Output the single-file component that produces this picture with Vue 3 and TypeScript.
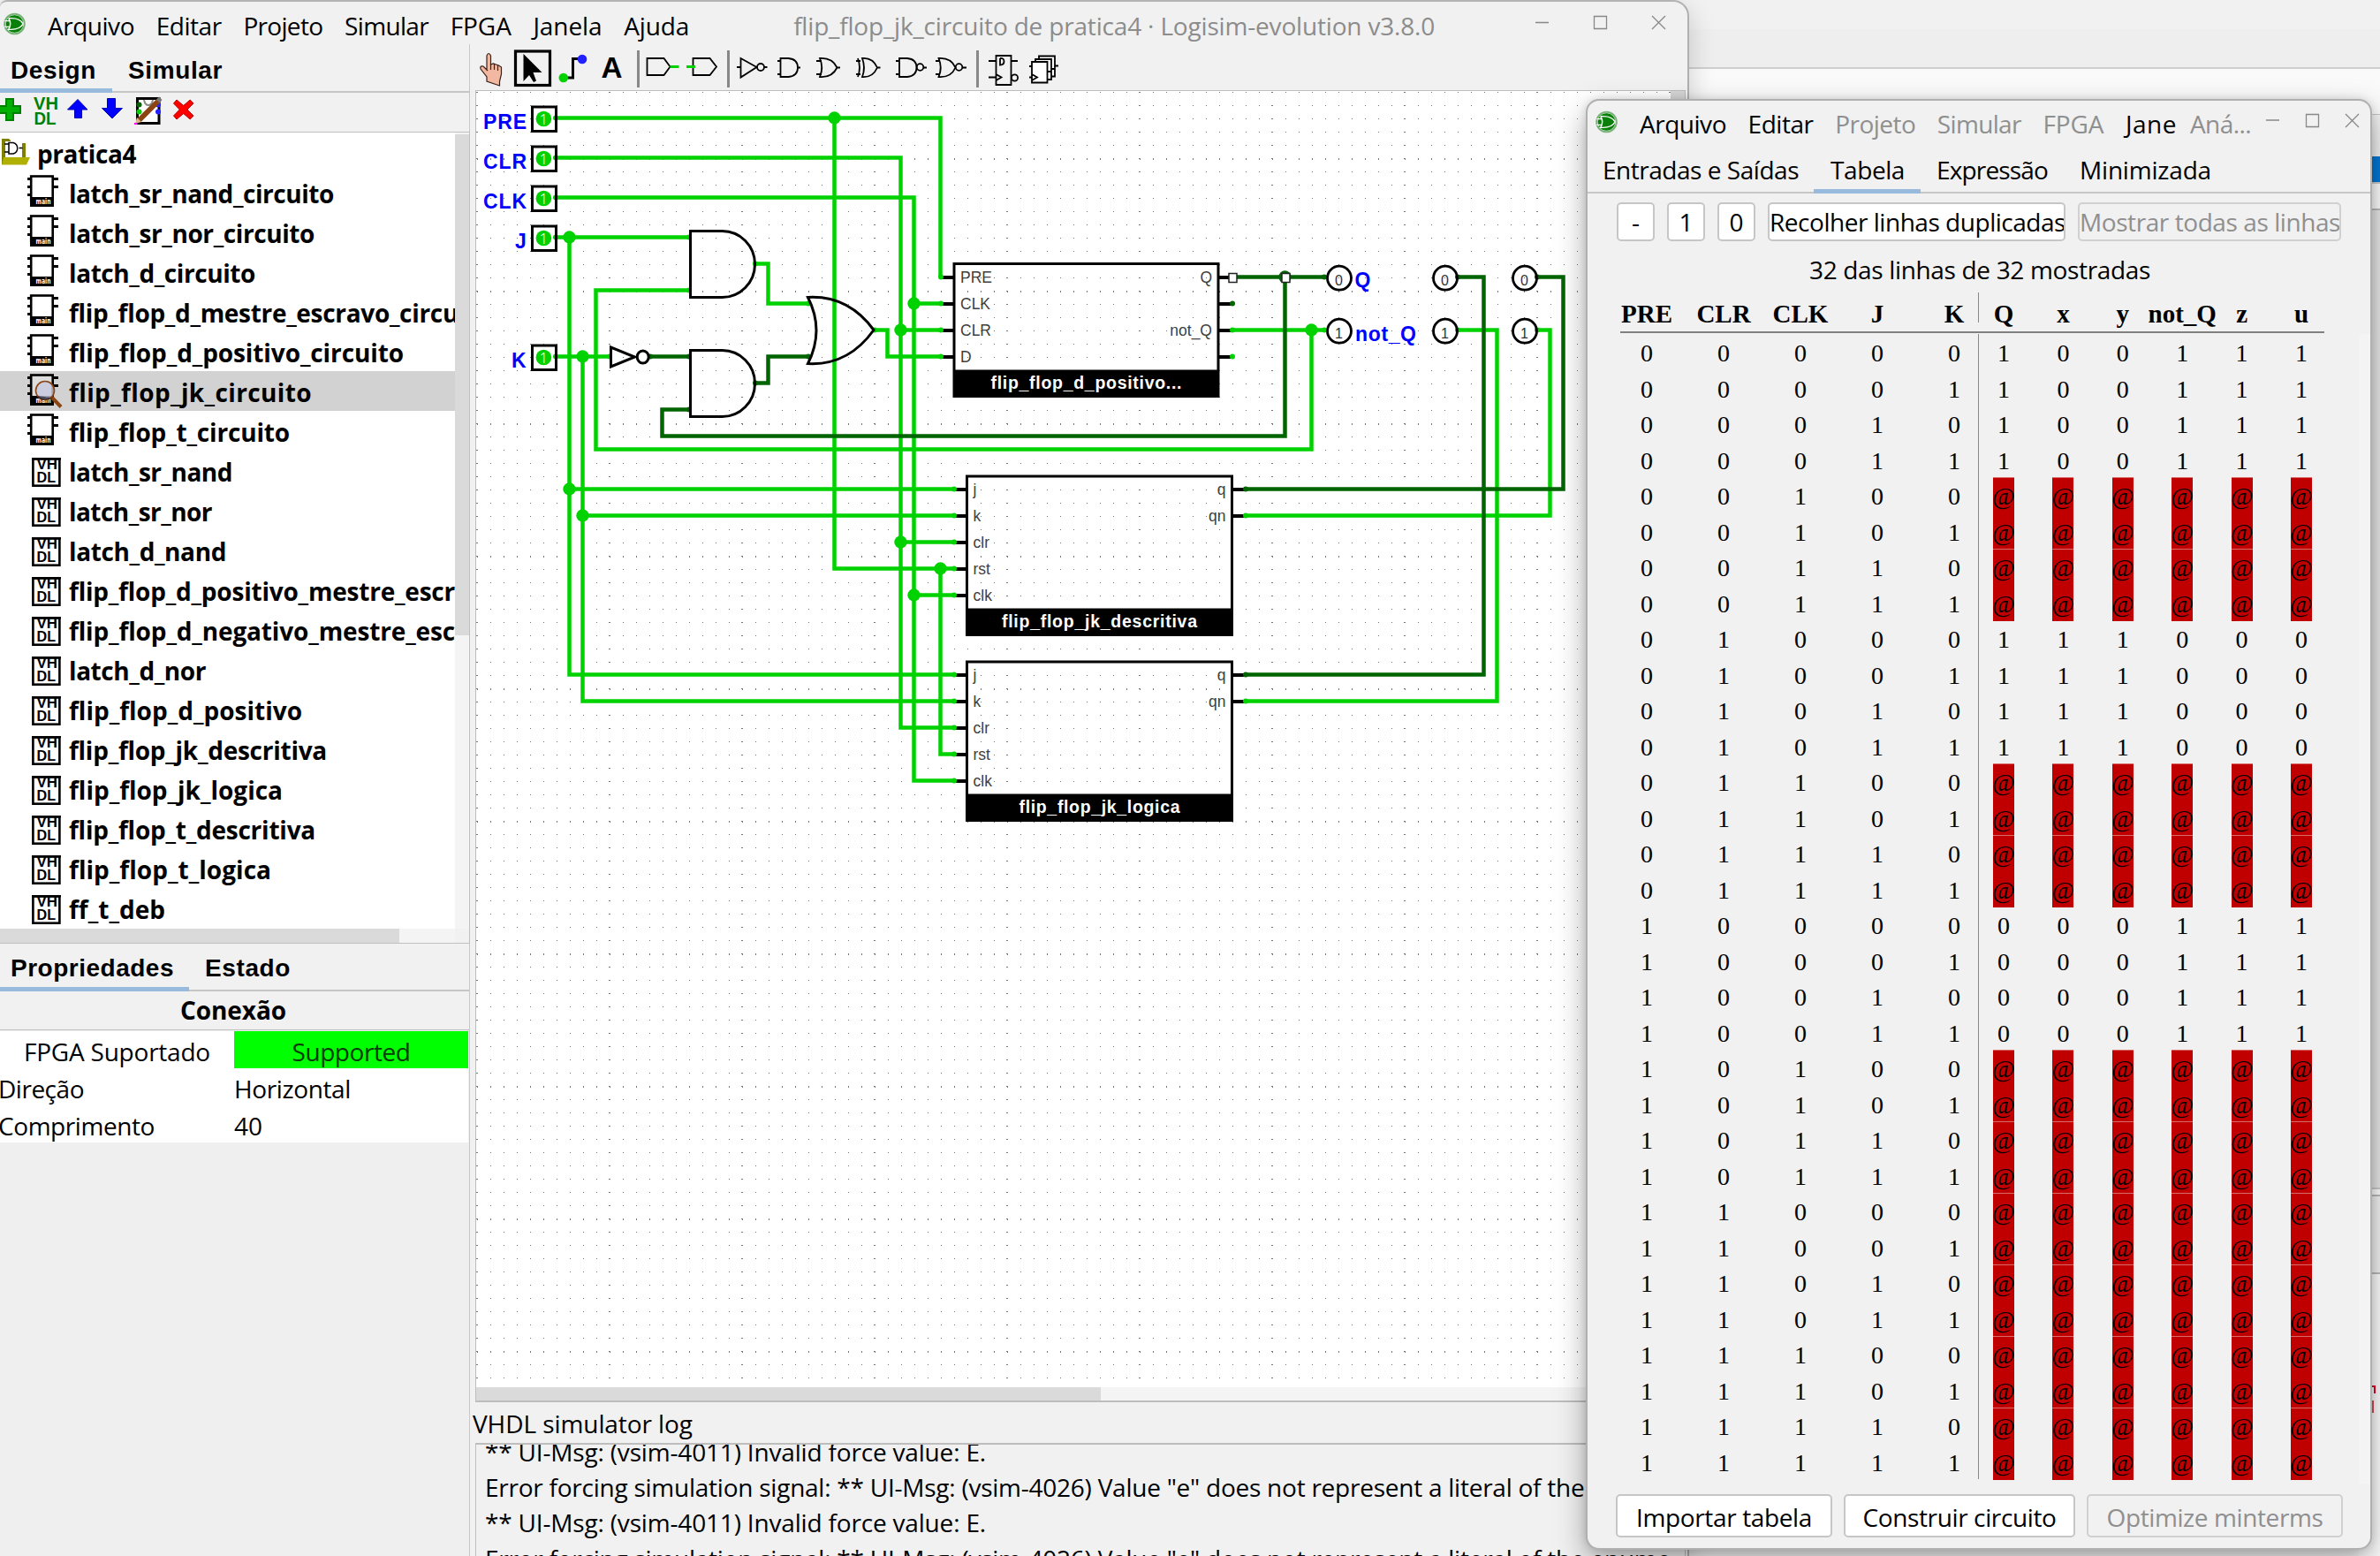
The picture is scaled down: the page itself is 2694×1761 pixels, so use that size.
<script setup lang="ts">
interface Label { t: string; w: number; off?: boolean }
interface Box { x: number; y: number; w: number; h: number; strip: number; name: string; nameW: number; ins: [string, number][]; outs: [string, number][]; pad: number }

// Tunes tracking so that a label takes exactly the given width.
const vFit = {
  mounted(el: HTMLElement, binding: { value: number }) {
    const n = (el.textContent ?? '').length
    if (!n || !binding.value) return
    el.style.letterSpacing = (binding.value - el.getBoundingClientRect().width) / n + 'px'
  },
}

const menu: Label[] = [
  { t: 'Arquivo', w: 98 }, { t: 'Editar', w: 74 }, { t: 'Projeto', w: 90 }, { t: 'Simular', w: 95 },
  { t: 'FPGA', w: 69 }, { t: 'Janela', w: 78 }, { t: 'Ajuda', w: 74 },
]
const menu2: Label[] = [
  { t: 'Arquivo', w: 98 }, { t: 'Editar', w: 74 }, { t: 'Projeto', w: 91, off: true }, { t: 'Simular', w: 95, off: true },
  { t: 'FPGA', w: 69, off: true }, { t: 'Jane', w: 58 },
]
const tree: { t: string; w: number; k: 'chip' | 'open' | 'vhdl' }[] = [
  { t: 'latch_sr_nand_circuito', w: 300, k: 'chip' },
  { t: 'latch_sr_nor_circuito', w: 278, k: 'chip' },
  { t: 'latch_d_circuito', w: 211, k: 'chip' },
  { t: 'flip_flop_d_mestre_escravo_circu', w: 441, k: 'chip' },
  { t: 'flip_flop_d_positivo_circuito', w: 379, k: 'chip' },
  { t: 'flip_flop_jk_circuito', w: 275, k: 'open' },
  { t: 'flip_flop_t_circuito', w: 250, k: 'chip' },
  { t: 'latch_sr_nand', w: 185, k: 'vhdl' },
  { t: 'latch_sr_nor', w: 162, k: 'vhdl' },
  { t: 'latch_d_nand', w: 178, k: 'vhdl' },
  { t: 'flip_flop_d_positivo_mestre_escr', w: 437, k: 'vhdl' },
  { t: 'flip_flop_d_negativo_mestre_esc', w: 437, k: 'vhdl' },
  { t: 'latch_d_nor', w: 155, k: 'vhdl' },
  { t: 'flip_flop_d_positivo', w: 264, k: 'vhdl' },
  { t: 'flip_flop_jk_descritiva', w: 292, k: 'vhdl' },
  { t: 'flip_flop_jk_logica', w: 242, k: 'vhdl' },
  { t: 'flip_flop_t_descritiva', w: 279, k: 'vhdl' },
  { t: 'flip_flop_t_logica', w: 229, k: 'vhdl' },
  { t: 'ff_t_deb', w: 109, k: 'vhdl' },
]
const log: Label[] = [
  { t: '** UI-Msg: (vsim-4011) Invalid force value: E.', w: 567 },
  { t: 'Error forcing simulation signal: ** UI-Msg: (vsim-4026) Value "e" does not represent a literal of the enume', w: 1342 },
  { t: '** UI-Msg: (vsim-4011) Invalid force value: E.', w: 567 },
  { t: 'Error forcing simulation signal: ** UI-Msg: (vsim-4026) Value "e" does not represent a literal of the enume', w: 1342 },
]

const pins: { n: string; y: number; w: number }[] = [
  { n: 'PRE', y: 133.5, w: 49 }, { n: 'CLR', y: 178.5, w: 49 }, { n: 'CLK', y: 223.5, w: 49 },
  { n: 'J', y: 268.5, w: 13 }, { n: 'K', y: 403.5, w: 17 },
]
const wires = [
  'M629 133.5H1064.5V313.5', 'M944.5 133.5V643.5H1080', 'M1064.5 643.5V853.5H1080',
  'M629 178.5H1019.5V823.5H1080', 'M1019.5 373.5H1065', 'M1019.5 613.5H1080',
  'M629 223.5H1034.5V883.5H1080', 'M1034.5 343.5H1065', 'M1034.5 673.5H1080',
  'M629 268.5H780', 'M644.5 268.5V763.5H1080', 'M644.5 553.5H1080',
  'M629 403.5H690', 'M659.5 403.5V793.5H1080', 'M659.5 583.5H1080',
  'M780 328.5H674.5V508.5H1484.5V373.5', 'M855 298.5H869.5V343.5H916', 'M989 373.5H1004.5V403.5H1065',
  'M1395 373.5H1500', 'M1650 373.5H1694.5V793.5H1409', 'M1740 373.5H1754.5V583.5H1409',
]
const darkWires = [
  'M735 403.5H780', 'M855 433.5H869.5V403.5H916', 'M780 463.5H749.5V493.5H1454.5V313.5', 'M1395 313.5H1500',
  'M1650 313.5H1679.5V763.5H1409', 'M1740 313.5H1769.5V553.5H1409',
]
const joints = [
  [944.5, 133.5], [644.5, 268.5], [659.5, 403.5], [1034.5, 343.5], [1019.5, 373.5], [1484.5, 373.5],
  [644.5, 553.5], [659.5, 583.5], [1019.5, 613.5], [1064.5, 643.5], [1034.5, 673.5],
]
const ends = [
  [629, 133.5], [629, 178.5], [629, 223.5], [629, 268.5], [629, 403.5], [780, 268.5], [780, 328.5], [855, 298.5],
  [915, 343.5], [990, 373.5], [690, 403.5], [1065, 313.5], [1065, 343.5], [1065, 373.5], [1065, 403.5],
  [1395, 373.5], [1395, 403.5], [1499, 373.5], [1650, 373.5], [1740, 373.5], [1410, 583.5], [1410, 793.5],
  [1080, 553.5], [1080, 583.5], [1080, 613.5], [1080, 643.5], [1080, 673.5],
  [1080, 763.5], [1080, 793.5], [1080, 823.5], [1080, 853.5], [1080, 883.5],
]
const darkEnds = [
  [736, 403.5], [780, 403.5], [780, 463.5], [855, 433.5], [915, 403.5], [1395, 343.5], [1499, 313.5],
  [1650, 313.5], [1740, 313.5], [1410, 553.5], [1410, 763.5],
]
const jk = (y: number): [string, number][] => [['j', y], ['k', y + 30], ['clr', y + 60], ['rst', y + 90], ['clk', y + 120]]
const boxes: Box[] = [
  { x: 1080, y: 298.5, w: 299, h: 150, strip: 418.5, name: 'flip_flop_d_positivo...', nameW: 216, pad: 7,
    ins: [['PRE', 313.5], ['CLK', 343.5], ['CLR', 373.5], ['D', 403.5]], outs: [['Q', 313.5], ['', 343.5], ['not_Q', 373.5], ['', 403.5]] },
  { x: 1094.5, y: 539, w: 300, h: 179.5, strip: 688.5, name: 'flip_flop_jk_descritiva', nameW: 221, pad: 7,
    ins: jk(553.5), outs: [['q', 553.5], ['qn', 583.5]] },
  { x: 1094.5, y: 749, w: 300, h: 179.5, strip: 898.5, name: 'flip_flop_jk_logica', nameW: 182, pad: 7,
    ins: jk(763.5), outs: [['q', 763.5], ['qn', 793.5]] },
]
const probes = [[1516, 314.7, '0'], [1516, 374.7, '1'], [1636, 314.7, '0'], [1636, 374.7, '1'], [1726, 314.7, '0'], [1726, 374.7, '1']] as [number, number, string][]

const inNames = ['PRE', 'CLR', 'CLK', 'J', 'K']
const outNames = ['Q', 'x', 'y', 'not_Q', 'z', 'u']
const rows = Array.from({ length: 32 }, (_, i) => {
  const ins = [16, 8, 4, 2, 1].map((m) => (i & m ? '1' : '0'))
  const bad = (i & 4) !== 0 || i >= 24
  const outs = bad ? '@@@@@@' : i < 8 ? '100111' : i < 16 ? '111000' : '000111'
  return { ins, outs: outs.split(''), bad }
})
</script>

<template>
  <div class="desktop">
    <div class="behind-top"></div>
    <div class="behind-mid"></div>
    <div class="sliver">
      <i style="height: 47px"></i>
      <i class="blue"></i>
      <i class="strip"></i>
      <i class="pane"></i>
      <i class="strip tall"></i>
      <i class="strip tall2"></i>
      <i class="white"><b></b><b class="sm"></b></i>
    </div>

    <section class="win main">
      <header class="menubar">
        <svg class="logo" width="26" height="26" viewBox="0 0 26 26"><circle cx="13" cy="13" r="12" fill="#0a800a" stroke="#7fb27f" stroke-width="1.6" /><circle cx="13" cy="13" r="10.7" fill="none" stroke="#d8ecd8" stroke-width=".9" /><path d="M6 6.500Q19 5.500 23 13Q19 20.500 6 19.500Q10 13 6 6.500M1.500 9.500H7M1.500 16.500H7" fill="none" stroke="#fff" stroke-width="1.500" /></svg>
        <nav><span v-for="m in menu" :key="m.t" v-fit="m.w">{{ m.t }}</span></nav>
        <span v-fit="726" class="title">flip_flop_jk_circuito de pratica4 · Logisim-evolution v3.8.0</span>
        <svg class="ctl" width="150" height="20" viewBox="0 0 150 20" fill="none" stroke="#888" stroke-width="1.3"><path d="M0 9.500H15M66.500 2.500h14v14h-14zM132 2l15 15M147 2l-15 15" /></svg>
      </header>

      <div class="cols">
        <aside>
          <div class="tabs bold"><span class="on d1"><em v-fit="97">Design</em></span><span class="d2"><em v-fit="107">Simular</em></span></div>
          <svg class="tools" width="531" height="44" viewBox="0 105 531 44">
            <path d="M7 112h8v8h8v8h-8v8h-8v-8h-9v-8h9z" fill="#00b000" stroke="#008000" stroke-width="2" />
            <g font-family="Liberation Sans" font-weight="bold" font-size="20" fill="#008000"><text x="38" y="123.500" textLength="28" lengthAdjust="spacingAndGlyphs">VH</text><text x="38.500" y="141" textLength="25" lengthAdjust="spacingAndGlyphs">DL</text></g>
            <path d="M88 112.500l11 11.500h-6.500v9.500h-8v-9.500h-8z" fill="#00f" stroke="#0000b0" />
            <path d="M121.500 111.500h9v11h8l-11.500 11.500-11.500-11.500h6z" fill="#00f" stroke="#0000b0" />
            <rect x="155.500" y="111.500" width="24.500" height="28" fill="#fff" stroke="#000" stroke-width="3" />
            <path d="M163 113q1 6 5 6t5-6" fill="none" stroke="#888" stroke-width="2" /><circle cx="157.500" cy="118.500" r="3" fill="#006400" /><circle cx="157.500" cy="126.500" r="3" fill="#00d200" /><circle cx="179" cy="118.500" r="3" fill="#22f" /><circle cx="179" cy="126.500" r="3" fill="#22f" />
            <path d="M157 136.500l22-22" stroke="#8b4513" stroke-width="6" /><path d="M153 140l2-7 5 5z" fill="#deb887" /><path d="M177 112.500l3-3 3.500 3.500-3 3.500z" fill="#777" /><path d="M152 139h3v2h-3z" fill="#f0f" />
            <path d="M200 113l7.700 6.500 7.500-6.500 3.800 4-7 7 7 7-3.800 4-7.500-6.500-7.700 6.500-3.500-4 6.800-7-6.800-7z" fill="#f00" stroke="#b00" />
          </svg>
          <div class="tree">
            <div class="list">
              <div class="row">
                <svg width="42" height="45" viewBox="0 150 42 45"><path d="M2 157h8l2 2v20l-7 7h-3z" fill="#808000" /><path d="M6 160h19v19h-19z" fill="#fff" /><path d="M25 162h4v18h-4z" fill="#808000" /><path d="M5 163h5M5 172h5M10 161.500h5a6.500 6.500 0 0 1 0 12.500h-5zM21.500 167.500h4" fill="#fff" stroke="#000" stroke-width="1.500" /><path d="M4 178h30l-4 8.500h-28z" fill="#b0b000" /></svg>
                <span v-fit="112">pratica4</span>
              </div>
              <div v-for="r in tree" :key="r.t" class="row" :class="{ sel: r.k === 'open' }">
                <svg width="78" height="45" viewBox="0 0 78 45">
                  <template v-if="r.k !== 'vhdl'">
                    <path d="M31 7.500h4M31 16.500h4M31 25.500h4M60 7.500h6M60 16.500h6" stroke="#000" stroke-width="3" />
                    <rect x="35.200" y="4.500" width="24.500" height="28" :fill="r.k === 'open' ? '#ddd' : '#fff'" stroke="#000" stroke-width="2.600" />
                    <path d="M34 28h27v11h-27z" />
                    <text x="40.500" y="36" font-size="8.500" font-family="DejaVu Sans" fill="#fff" textLength="17" lengthAdjust="spacingAndGlyphs">main</text>
                    <g v-if="r.k === 'open'"><circle cx="51" cy="22" r="10.500" fill="#c8c8e0" fill-opacity=".8" stroke="#8b4513" stroke-width="1.600" /><path d="M42 28a10.500 10.500 0 0 0 16 2z" fill="#223" opacity=".7" /><path d="M59 30l10 10.500" stroke="#8b4513" stroke-width="4" /></g>
                  </template>
                  <template v-else>
                    <rect x="37.400" y="9.400" width="30" height="30.300" fill="#fff" stroke="#000" stroke-width="2.600" />
                    <g font-family="Liberation Sans" font-weight="bold" font-size="16"><text x="41.500" y="20.800" textLength="23.500" lengthAdjust="spacingAndGlyphs">VH</text><text x="41.500" y="35.700" textLength="21.500" lengthAdjust="spacingAndGlyphs">DL</text></g>
                    <path d="M36 8h33v2.600h-33z" />
                  </template>
                </svg>
                <span v-fit="r.w">{{ r.t }}</span>
              </div>
            </div>
            <div class="vbar"><i></i></div>
            <div class="hbar"><i></i></div>
          </div>
          <div class="tabs bold props"><span class="on p1"><em v-fit="185">Propriedades</em></span><span class="p2"><em v-fit="97">Estado</em></span></div>
          <div class="conexao"><span v-fit="120">Conexão</span></div>
          <div class="grid">
            <div class="g c"><span v-fit="211">FPGA Suportado</span></div><div class="g c ok"><span v-fit="134">Supported</span></div>
            <div class="g l"><span v-fit="96">Direção</span></div><div class="g"><span v-fit="132">Horizontal</span></div>
            <div class="g l"><span v-fit="176">Comprimento</span></div><div class="g"><span v-fit="32">40</span></div>
          </div>
        </aside>

        <main>
          <svg class="palette" width="1378" height="52" viewBox="532 50 1378 52" fill="none" stroke="#000" stroke-width="1.800">
            <path d="M551 92v-5l-7-9q-1-4 3-3l5 5-1-1v-16q2-5 4.500 0v10l3-1 3 1 3 1 3 2v8l-2 8v5z" fill="#f2b8a2" stroke="#3a2018" stroke-width="1.200" /><path d="M555.500 72v7M559.500 72v7M563.500 74v6" stroke="#3a2018" stroke-width="1.200" />
            <rect x="583.500" y="58" width="39" height="38.500" stroke-width="3.200" /><path d="M592.500 61v31l6.500-7 5 8 3-1.500-3.500-9.500h10z" fill="#000" stroke="none" />
            <path d="M638 88h10.500v-21.500h11" stroke-width="3" /><circle cx="637.800" cy="88" r="5.300" fill="#00d200" stroke="none" /><circle cx="659" cy="67" r="5.300" fill="#2222ff" stroke="none" />
            <text x="680.500" y="88" font-family="Liberation Sans" font-weight="bold" font-size="34" fill="#000" stroke="none" textLength="24" lengthAdjust="spacingAndGlyphs">A</text>
            <path d="M722.500 57v42M824.500 57v42M1106.500 57v42" stroke="#888" stroke-width="3" />
            <path d="M732.500 66h19l7 9.500-7 9.500h-19zM784.500 66h19l7.500 9.500-7.500 9.500h-19z" /><path d="M758.500 75.500h10M777 75.500h10" stroke="#00d200" stroke-width="3" />
            <path d="M834 76h4M838.500 66v21.500l18-11.500zM865 76h3.500" /><circle cx="861" cy="76" r="4" />
            <path d="M880 69h3M880 84h3M883.500 66h9q10.500 1 10.500 10.500t-10.500 10.500h-9zM903 76.500h3" />
            <path d="M924 69h6M924 84h6M928 66q14-1 19.500 10.500-5.500 11.500-19.500 10.500 4.500-10.500 0-21zM947 76.500h4" />
            <path d="M969 69h5M969 84h5M971 66q4 10.500 0 21M976 66q12-1 17 10.500-5 11.500-17 10.500 4-10.500 0-21zM993 76.500h3.500" />
            <path d="M1014 69h3M1014 84h3M1018 66h9q10.500 1 10.500 10.500t-10.500 10.500h-9zM1045 76.500h4" /><circle cx="1041.500" cy="76" r="3.800" />
            <path d="M1059 69h5M1059 84h5M1062.500 66q14-1 19 10.500-5 11.500-19 10.500 4.500-10.500 0-21zM1089 76.500h5" /><circle cx="1085.500" cy="76" r="3.800" />
            <path d="M1127.500 63h17v33h-17zM1119 69h8M1119 87.500h8M1144 69h8M1127.500 84l6 3.500-6 3.500M1132 66v7.500q4.500 0 4.500-4t-4.500-3.500" /><circle cx="1148.500" cy="88" r="3.600" />
            <path d="M1176 63.500h18v23h-18z" fill="#fff" /><path d="M1172 67h18v23h-18z" fill="#fff" /><path d="M1168 70h17.500v23.500h-17.500zM1165 75h3M1165 87.500h3M1194 74.500h4M1168 84l6 3.500-6 3.500M1186 81h4M1190 78h4" fill="#fff" />
          </svg>

          <div class="canvas">
            <svg class="circuit" width="1352" height="1467" viewBox="539 103 1352 1467" font-family="Liberation Sans">
              <defs>
                <pattern id="dot" x="540" y="119" width="15" height="15" patternUnits="userSpaceOnUse"><rect width="1" height="1" fill="#777" /></pattern>
                <pattern id="dotCol" x="539" y="119" width="150" height="15" patternUnits="userSpaceOnUse"><rect width="2" height="1" fill="#777" /></pattern>
                <pattern id="dotRow" x="540" y="179" width="15" height="150" patternUnits="userSpaceOnUse"><rect width="1" height="2" fill="#777" /></pattern>
              </defs>
              <rect x="539" y="103" width="1352" height="1467" fill="url(#dot)" />
              <rect x="539" y="103" width="1352" height="1467" fill="url(#dotCol)" />
              <rect x="539" y="103" width="1352" height="1467" fill="url(#dotRow)" />

              <g fill="none" stroke="#000" stroke-width="4"><template v-for="b in boxes" :key="b.name + 'p'"><path v-for="i in b.ins" :key="i[0]" :d="`M${b.x - 15} ${i[1] + .5}h15`" /><path v-for="o in b.outs" :key="o[1]" :d="`M${b.x + b.w} ${o[1] + .5}h15`" /></template></g>
              <g fill="none" stroke="#00d200" stroke-width="4.500"><path v-for="w in wires" :key="w" :d="w" /></g>
              <g fill="none" stroke="#006400" stroke-width="4.500"><path v-for="w in darkWires" :key="w" :d="w" /></g>
              <circle v-for="(e, i) in ends" :key="'e' + i" :cx="e[0]" :cy="e[1]" r="3" fill="#00d200" />
              <circle v-for="(e, i) in darkEnds" :key="'d' + i" :cx="e[0]" :cy="e[1]" r="3" fill="#006400" />
              <circle v-for="(e, i) in joints" :key="'j' + i" :cx="e[0]" :cy="e[1]" r="7.200" fill="#00d200" />
              <circle cx="1454.500" cy="313.500" r="7.200" fill="#006400" />

              <g fill="none" stroke="#000" stroke-width="3">
                <path d="M781.500 261.500h36a37 37.500 0 0 1 0 75h-36zM781.500 396.500h36a37 37.500 0 0 1 0 75h-36z" />
                <path d="M914.500 336.500Q960 334 989 373.500Q960 414 914.500 411.500Q933.500 374 914.500 336.500z" />
                <path d="M691.500 393v22l27-11z" /><ellipse cx="727.700" cy="404" rx="6.500" ry="7" />
              </g>

              <g v-for="p in pins" :key="p.n">
                <rect x="602.500" :y="p.y - 12.500" width="27" height="27.500" fill="none" stroke="#000" stroke-width="3" />
                <circle cx="615.400" :cy="p.y + 1" r="8.800" fill="#00d200" />
                <text x="615.400" :y="p.y + 7.500" text-anchor="middle" font-family="Noto Sans" font-weight="300" font-size="16" fill="#fff">1</text>
                <text :x="596 - p.w" :y="p.y + 12.500" font-weight="bold" font-size="23" fill="#00f" :textLength="p.w">{{ p.n }}</text>
              </g>

              <g v-for="b in boxes" :key="b.name">
                <rect :x="b.x" :y="b.y" :width="b.w" :height="b.h" fill="none" stroke="#000" stroke-width="3" />
                <rect :x="b.x" :y="b.strip" :width="b.w" :height="b.y + b.h - b.strip" />
                <text :x="b.x + b.w / 2 - b.nameW / 2" :y="b.strip + 21.200" font-weight="bold" font-size="19.500" fill="#fff" :textLength="b.nameW">{{ b.name }}</text>
                <g font-size="17.500" fill="#404040">
                  <text v-for="i in b.ins" :key="i[0]" :x="b.x + b.pad" :y="i[1] + 6">{{ i[0] }}</text>
                  <text v-for="o in b.outs" :key="o[1]" :x="b.x + b.w - 7" :y="o[1] + 6" text-anchor="end">{{ o[0] }}</text>
                </g>
              </g>

              <g v-for="(p, i) in probes" :key="'o' + i">
                <circle :cx="p[0]" :cy="p[1]" r="13.500" fill="none" stroke="#000" stroke-width="2.800" />
                <text :x="p[0] - .5" :y="p[1] + 8" text-anchor="middle" font-size="16" fill="#333">{{ p[2] }}</text>
              </g>
              <g font-weight="bold" font-size="23" fill="#00f"><text x="1533.500" y="325" textLength="18">Q</text><text x="1534" y="385.500" textLength="69">not_Q</text></g>
              <g fill="#fff" stroke="#222" stroke-width="1.500"><rect x="1391" y="309.500" width="9" height="10" /><rect x="1451" y="309.500" width="9" height="10" /></g>
            </svg>
            <div class="cv"></div>
            <div class="ch"><i></i></div>
          </div>

          <div class="logtitle"><span v-fit="249">VHDL simulator log</span></div>
          <div class="log"><div v-for="(l, i) in log" :key="i"><span v-fit="l.w">{{ l.t }}</span></div></div>
        </main>
      </div>
    </section>

    <section class="win table">
      <header class="menubar2">
        <svg class="logo" width="25" height="26" viewBox="0 0 26 26"><circle cx="13" cy="13" r="12" fill="#0a800a" stroke="#7fb27f" stroke-width="1.6" /><circle cx="13" cy="13" r="10.7" fill="none" stroke="#d8ecd8" stroke-width=".9" /><path d="M6 6.500Q19 5.500 23 13Q19 20.500 6 19.500Q10 13 6 6.500M1.500 9.500H7M1.500 16.500H7" fill="none" stroke="#fff" stroke-width="1.500" /></svg>
        <nav><span v-for="m in menu2" :key="m.t" v-fit="m.w" :class="{ off: m.off }">{{ m.t }}</span></nav>
        <span v-fit="69" class="off ana">Aná...</span>
        <svg class="ctl2" width="107" height="20" viewBox="0 0 107 20" fill="none" stroke="#888" stroke-width="1.300"><path d="M0 10h15M45.500 3.500h14v14h-14zM90 3l15 15M105 3l-15 15" /></svg>
      </header>
      <div class="tabs t2"><span class="a"><em v-fit="222">Entradas e Saídas</em></span><span class="on b"><em v-fit="84">Tabela</em></span><span class="c3"><em v-fit="126">Expressão</em></span><span class="d"><em v-fit="149">Minimizada</em></span></div>
      <div class="btns">
        <button>-</button><button>1</button><button>0</button>
        <button class="w1"><span v-fit="335">Recolher linhas duplicadas</span></button>
        <button class="w2" disabled><span v-fit="295">Mostrar todas as linhas</span></button>
      </div>
      <div class="status"><span v-fit="386">32 das linhas de 32 mostradas</span></div>
      <div class="trow head">
        <div class="ins"><b v-for="n in inNames" :key="n">{{ n }}</b></div><i class="div"></i><div class="outs"><b v-for="n in outNames" :key="n">{{ n }}</b></div>
      </div>
      <div class="body">
        <div class="rowsbox">
          <div v-for="(r, i) in rows" :key="i" class="trow">
            <div class="ins"><span v-for="(c, k) in r.ins" :key="k">{{ c }}</span></div><i class="div"></i>
            <div class="outs" :class="{ bad: r.bad, seam: r.bad && i % 2 === 0 }"><span v-for="(c, k) in r.outs" :key="k">{{ c }}</span></div>
          </div>
        </div>
        <div class="tbar"></div>
      </div>
      <footer>
        <button style="width: 245px"><span v-fit="199">Importar tabela</span></button>
        <button style="width: 262px"><span v-fit="219">Construir circuito</span></button>
        <button style="width: 290px" disabled><span v-fit="245">Optimize minterms</span></button>
      </footer>
    </section>
  </div>
</template>

<style>
html, body { margin: 0; background: #fff; }
</style>

<style scoped>
* { box-sizing: border-box; }
.desktop { position: relative; width: 2694px; height: 1761px; overflow: hidden; background: #fafafa; font-family: "Open Sans", "Noto Sans", sans-serif; font-size: 28px; color: #000; display: flex; flex-direction: column; }
.desktop span, .desktop em { white-space: nowrap; display: inline-block; font-style: normal; }
.behind-top { height: 33px; background: #f1f1f1; flex: none; }
.behind-mid { height: 45px; background: #eeeeee; border-bottom: 2px solid #cfcfcf; flex: none; }
.sliver { margin-left: auto; margin-top: 51px; width: 24px; height: 1632px; display: flex; flex-direction: column; border-top: 1px solid #c4c4c4; background: #f3f3f3; }
.sliver i { display: block; flex: none; }
.sliver .blue { height: 29px; background: #0078d7; }
.sliver .strip { height: 32px; border-top: 2px solid #ccc; border-bottom: 2px solid #bbb; background: #fff; }
.sliver .pane { height: 1106px; background: #e9e9e9; }
.sliver .tall { height: 10px; }
.sliver .tall2 { height: 88px; background: #f4f4f4; border-top: 0; display: block; }
.sliver .white { flex: 1; background: #fff; padding: 126px 0 0 14px; }
.sliver .white b { display: block; width: 5px; height: 9px; border: 2px solid #e8002a; border-width: 2px 2px 0 0; }
.sliver .white .sm { width: 3px; height: 14px; margin-top: 8px; background: #d94a5a; border: 0; }

.win { position: absolute; background: #f1f1f1; overflow: hidden; }
.main { left: 0; top: 0; width: 1912px; height: 1761px; border-top: 2px solid #b4b4b4; border-right: 2px solid #b0b0b0; border-radius: 8px 18px 0 0; box-shadow: 0 10px 30px rgba(0,0,0,.18); }
.menubar { height: 48px; padding-top: 6px; line-height: 42px; display: flex; position: relative; }
.menubar .logo { margin: 6px 25px 0 4px; width: 25px; height: 26px; flex: none; }
.menubar nav { display: flex; gap: 24.700px; }
.menubar2 nav { display: flex; gap: 24.600px; }
.title { color: #8c8c8c; margin-left: 118px; }
.ctl { margin: 8px 0 0 114px; }
.cols { display: flex; height: 1711px; }
aside { width: 532px; flex: none; border-right: 1px solid #c8c8c8; display: flex; flex-direction: column; }
.tabs { display: flex; border-bottom: 2px solid #c6c6c6; }
.tabs span { margin-bottom: -2px; }
.tabs .on { border-bottom: 5px solid #97badd; }
.bold { font-family: "Liberation Sans", Arial, sans-serif; font-weight: bold; }
aside .tabs { height: 55px; padding-top: 9px; line-height: 42px; }
.d1 { width: 127px; padding-left: 12px; }
.d2 { padding-left: 18px; }
.tools { display: block; flex: none; margin-bottom: 0; }
.tree { width: 532px; height: 919px; flex: none; display: grid; grid-template: 901px 16px / 515px 16px; border: 1px solid #c0c0c0; border-left: 0; background: #f1f1f1; }
.list { background: #fff; overflow: hidden; font-weight: bold; }
.row { height: 45px; line-height: 48px; display: flex; width: 700px; }
.row svg { flex: none; }
.row.sel { background: #d2d2d2; }
.vbar { background: #f4f4f4; padding-top: 2px; }
.vbar i { display: block; height: 567px; background: #dadada; }
.hbar { background: #f4f4f4; }
.hbar i { display: block; height: 16px; width: 452px; background: #dadada; }
aside .props { height: 54px; padding-top: 6px; line-height: 44px; }
.p1 { width: 214px; padding-left: 12px; }
.p2 { padding-left: 18px; }
.conexao { height: 44px; line-height: 43px; text-align: center; font-weight: bold; border-bottom: 1px solid #c0c0c0; padding-right: 3px; }
.grid { display: grid; grid-template-columns: 265px 265px; grid-auto-rows: 42px; background: #efefef; flex: 1; align-content: start; padding-top: 1px; }
.g { background: #fff; line-height: 46px; height: 42px; }
.c { text-align: center; }
.l { text-indent: -1px; }
.ok { background: #0f0; color: #063a06; }

main { width: 1378px; }
.palette { display: block; }
.canvas { margin-left: 6px; width: 1370px; height: 1485px; border: 1px solid #bdbdbd; border-bottom-width: 2px; background: #fff; display: grid; grid-template: 1467px 15px / 1352px 16px; }
.circuit { display: block; }
.cv { background: #d6d6d6; }
.ch { background: #f4f4f4; grid-column: 1 / 3; }
.ch i { display: block; width: 707px; height: 15px; background: #dadada; }
.logtitle { height: 46px; line-height: 48px; padding-left: 3px; }
.log { margin-left: 6px; width: 1370px; height: 130px; border: 1px solid #bdbdbd; border-top-width: 2px; overflow: hidden; padding-left: 10px; }
.log div { line-height: 40px; height: 40.200px; position: relative; top: -12px; width: 1342px; overflow: hidden; }

.table { left: 1795px; top: 112px; width: 890px; height: 1642px; border: 2px solid #b0b0b0; border-radius: 15px; box-shadow: 0 14px 34px rgba(0,0,0,.34), 0 0 10px rgba(0,0,0,.12); }
.menubar2 { height: 52px; line-height: 52px; display: flex; }
.menubar2 .logo { margin: 11px 25px 0 9px; flex: none; }
.off { color: #8f8f8f; }
.ana { margin-left: 15px; }
.ctl2 { margin: 12px 0 0 17px; flex: none; }
.t2 { height: 53px; line-height: 53px; }
.t2 span { height: 53px; }
.a { width: 256px; padding-left: 17px; }
.b { width: 121px; padding-left: 19px; }
.c3 { width: 163px; padding-left: 18px; }
.d { padding-left: 17px; }
.btns { display: flex; padding: 10px 0 0 33px; gap: 14px; }
button { font: inherit; color: #000; background: #fff; border: 2px solid #c6c6c6; border-radius: 5px; width: 43px; height: 44px; line-height: 41px; padding: 0; display: block; text-align: center; overflow: hidden; }
button:disabled { background: #f1f1f1; color: #8f8f8f; border-color: #d0d0d0; }
.w1 { width: 337px; }
.w2 { width: 298px; }
.status { height: 58px; line-height: 64px; text-align: center; padding-left: 2px; }
.trow { height: 40.500px; line-height: 43px; display: flex; font-family: "Liberation Serif", "Times New Roman", serif; margin-left: 55px; }
.ins { display: flex; gap: 63px; }
.outs { display: flex; gap: 43.400px; margin-left: 16px; }
.ins > *, .outs > * { width: 24px; display: flex !important; justify-content: center; }
.div { width: 1.500px; margin-left: 14.500px; background: #888; }
.head { height: 48px; line-height: 50px; margin-left: 37px; width: 797px; padding-left: 18px; margin-top: -1px; font-size: 29px; background: linear-gradient(#808080, #808080) 0 45px / 100% 2px no-repeat; }
.head .div { height: 34px; margin-top: 1px; }
.body { display: flex; justify-content: space-between; height: 1301px; }
.tbar { width: 13px; background: #f4f4f4; }
.bad span { background: #c00000; height: 41px; }
.seam span { box-shadow: inset 0 1px #d86a6a; }
footer { display: flex; gap: 13px; padding: 12px 0 0 32px; }
footer button { height: 49px; line-height: 48px; }
</style>
